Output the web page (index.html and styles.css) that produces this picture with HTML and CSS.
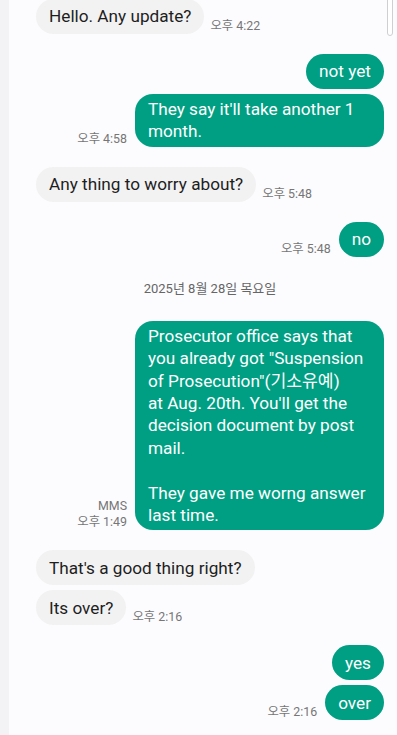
FILE: index.html
```html
<!DOCTYPE html>
<html lang="ko">
<head>
    <meta charset="UTF-8">
    <meta name="viewport" content="width=device-width, initial-scale=1.0">
    <title>Messages</title>
    <link rel="stylesheet" href="styles.css">
</head>
<body>
    <div class="screen">
        <div class="rail"></div>

        <div class="chat">
            <div class="group in">
                <div class="row">
                    <div class="bubble">Hello. Any update?</div>
                    <div class="time">오후 4:22</div>
                </div>
            </div>

            <div class="group out">
                <div class="row">
                    <div class="bubble">not yet</div>
                </div>
                <div class="row">
                    <div class="time">오후 4:58</div>
                    <div class="bubble">They say it'll take another 1 month.</div>
                </div>
            </div>

            <div class="group in">
                <div class="row">
                    <div class="bubble">Any thing to worry about?</div>
                    <div class="time">오후 5:48</div>
                </div>
            </div>

            <div class="group out">
                <div class="row">
                    <div class="time">오후 5:48</div>
                    <div class="bubble">no</div>
                </div>
            </div>

            <div class="date">2025년 8월 28일 목요일</div>

            <div class="group out first">
                <div class="row">
                    <div class="time">MMS<br>오후 1:49</div>
                    <div class="bubble multi">Prosecutor office says that you already got "Suspension of Prosecution"(기소유예)
at Aug. 20th. You'll get the decision document by post mail.

They gave me worng answer last time.</div>
                </div>
            </div>

            <div class="group in">
                <div class="row">
                    <div class="bubble">That's a good thing right?</div>
                </div>
                <div class="row">
                    <div class="bubble">Its over?</div>
                    <div class="time">오후 2:16</div>
                </div>
            </div>

            <div class="group out">
                <div class="row">
                    <div class="bubble">yes</div>
                </div>
                <div class="row">
                    <div class="time">오후 2:16</div>
                    <div class="bubble">over</div>
                </div>
            </div>
        </div>

        <div class="scrollbar"></div>
    </div>
</body>
</html>
```

FILE: styles.css
```css
body {
    margin: 0;
    font-family: Roboto, "Noto Sans CJK KR", sans-serif;
    background-color: #fcfcfe;
}

.screen {
    position: relative;
    display: flex;
    height: 735px;
    overflow: hidden;
}

.rail {
    width: 9px;
    flex-shrink: 0;
    background-color: #f3f3f5;
}

.chat {
    flex: 1;
    padding: 0 13px 0 27px;
    margin-top: -1px;
}

.group {
    display: flex;
    flex-direction: column;
    gap: 5px;
    margin-top: 20px;
}

.group:first-child,
.group.first {
    margin-top: 0;
}

.row {
    display: flex;
    align-items: flex-end;
}

.in .row {
    justify-content: flex-start;
    gap: 6px;
}

.out .row {
    justify-content: flex-end;
    gap: 8px;
}

.bubble {
    box-sizing: border-box;
    display: flex;
    align-items: center;
    min-height: 35px;
    max-width: 249px;
    padding: 4px 13px;
    border-radius: 18px;
    font-size: 17.2px;
    line-height: 22.4px;
}

.in .bubble {
    background-color: #f2f2f3;
    color: #1e1e1e;
}

.out .bubble {
    background-color: #009f83;
    color: #ffffff;
}

.multi {
    white-space: pre-line;
}

.time {
    font-size: 12.4px;
    line-height: 16px;
    color: #767676;
    text-align: right;
    white-space: nowrap;
}

.date {
    margin: 24px 0;
    text-align: center;
    font-size: 13px;
    line-height: 16px;
    color: #666666;
}

.scrollbar {
    position: absolute;
    top: -2px;
    right: 4px;
    width: 4px;
    height: 36px;
    border: 1px solid #cfcfd2;
    border-radius: 0 0 3px 3px;
    background-color: #ffffff;
}
```
